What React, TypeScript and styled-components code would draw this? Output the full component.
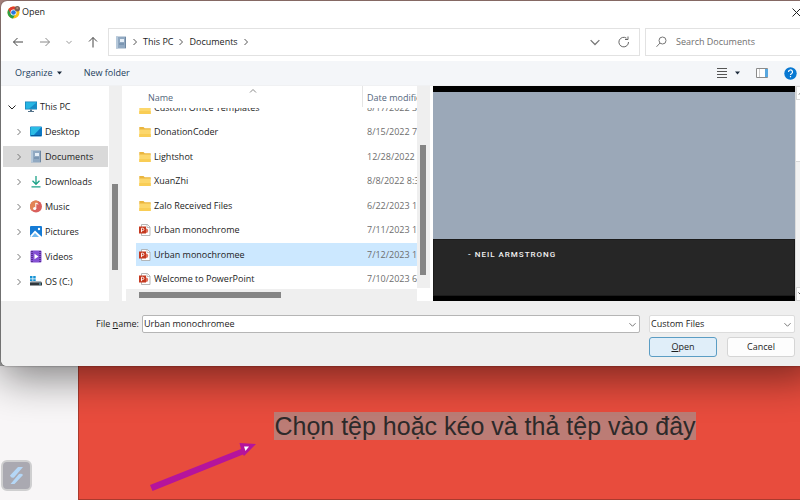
import React, { useState } from "react";
import styled, { createGlobalStyle } from "styled-components";

const GlobalStyle = createGlobalStyle`
  *, *::before, *::after { box-sizing: border-box; }
  body { margin: 0; font-family: "Open Sans", "Noto Sans", sans-serif; font-size: 9px; line-height: 14px; color: #1c1c1c; }
  button, input, select { font: inherit; color: inherit; margin: 0; }
  svg { display: block; flex: none; }
`;

const Page = styled.div`
  min-height: 100vh;
  display: flex;
  flex-direction: column;
  padding: 1px 0 0 1px;
  overflow: hidden;
  background: linear-gradient(#b08a84 0, #aaa 80px);
`;

const Dialog = styled.section`
  position: relative;
  z-index: 1;
  display: flex;
  flex-direction: column;
  margin-right: -16px;
  border-radius: 6px;
  overflow: hidden;
  background: #fff;
  box-shadow: 0 12px 40px rgba(0, 0, 0, 0.48), 0 0 2px rgba(0, 0, 0, 0.5);
`;

const TitleBar = styled.header`
  display: flex;
  align-items: center;
  gap: 2px;
  height: 22px;
  padding: 0 15px 0 6px;
`;

const Title = styled.h1`
  flex: 1;
  margin: 0;
  font-size: 9px;
  font-weight: 400;
`;

const PlainButton = styled.button`
  display: flex;
  align-items: center;
  gap: 4px;
  padding: 0;
  border: 0;
  background: none;
`;

const NavRow = styled.div`
  display: flex;
  align-items: center;
  gap: 5px;
  height: 38px;
  padding-left: 11px;
`;

const NavButtons = styled.div`
  display: flex;
  align-items: center;
  gap: 15px;
  width: 91px;
`;

const AddressBar = styled.nav`
  flex: 1;
  display: flex;
  align-items: center;
  gap: 4px;
  height: 28px;
  padding: 0 9px 0 6px;
  border: 1px solid #e2e2e2;
`;

const Spacer = styled.div`
  flex: 1;
`;

const AddressTools = styled.div`
  display: flex;
  align-items: center;
  gap: 18px;
`;

const SearchBox = styled.label`
  display: flex;
  align-items: center;
  gap: 9px;
  width: 171px;
  height: 28px;
  padding-left: 10px;
  border: 1px solid #e2e2e2;
`;

const SearchInput = styled.input`
  width: 120px;
  padding: 0;
  border: 0;
  outline: 0;
  background: none;
  &::placeholder { color: #6f6f6f; opacity: 1; }
`;

const Toolbar = styled.div`
  display: flex;
  align-items: center;
  height: 25px;
  padding: 0 19px 0 14px;
  background: #f4f6f9;
  color: #23405c;
  border-bottom: 1px solid #f0f1f3;
`;

const ToolGroup = styled.div<{ $gap: number }>`
  display: flex;
  align-items: center;
  gap: ${(p) => p.$gap}px;
`;

const Body = styled.div`
  display: flex;
  height: 215px;
`;

const Tree = styled.ul`
  width: 108px;
  margin: 0;
  padding: 8px 1px 0 2px;
  list-style: none;
`;

const TreeItem = styled.li<{ $root?: boolean; $selected?: boolean }>`
  display: flex;
  align-items: center;
  gap: ${(p) => (p.$root ? 9 : 7)}px;
  height: 21px;
  margin: 2px 0 4px;
  padding-left: ${(p) => (p.$root ? 5 : 12)}px;
  white-space: nowrap;
  background: ${(p) => (p.$selected ? "#d9d9d9" : "transparent")};
`;

const TreeLabel = styled.a`
  display: flex;
  align-items: center;
  gap: 3px;
  color: inherit;
  text-decoration: none;
`;

const Track = styled.div<{ $top: number }>`
  width: 13px;
  padding: ${(p) => p.$top}px 4px 0 3px;
  background: #efefef;
`;

const Thumb = styled.div<{ $length: number; $horizontal?: boolean }>`
  width: ${(p) => (p.$horizontal ? `${p.$length}px` : "auto")};
  height: ${(p) => (p.$horizontal ? "6px" : `${p.$length}px`)};
  background: #858585;
`;

const FilePane = styled.div`
  display: flex;
  flex-direction: column;
  width: 295px;
  padding-left: 4px;
`;

const FileViewport = styled.div`
  flex: 1;
  padding-left: 10px;
  overflow: hidden;
`;

const HorizontalTrack = styled.div`
  height: 12px;
  padding: 3px 0 0 13px;
  background: #efefef;
`;

const FileTable = styled.table`
  width: 100%;
  table-layout: fixed;
  border-collapse: separate;
  border-spacing: 0;
`;

const HeadCell = styled.th<{ $width?: number; $divided?: boolean }>`
  width: ${(p) => (p.$width ? `${p.$width}px` : "auto")};
  height: 21px;
  padding: 2px 0 0 ${(p) => (p.$divided ? 4 : 12)}px;
  border-left: ${(p) => (p.$divided ? "1px solid #e5e5e5" : "0")};
  overflow: hidden;
  font-weight: 400;
  text-align: left;
  white-space: nowrap;
  color: #53667c;
`;

const HeadContent = styled.div`
  display: flex;
  align-items: center;
  position: relative;
`;

const SortMark = styled.span`
  position: absolute;
  left: 101px;
  top: -4px;
`;

const FileRow = styled.tr<{ $selected?: boolean }>`
  height: 24px;
  &:nth-child(odd) { height: 25px; }
  &:first-child { height: 13px; }
  td {
    padding: 0 0 0 3px;
    border: solid transparent;
    border-width: 1px 0;
    background: ${(p) => (p.$selected ? "#cce8ff" : "transparent")};
    background-clip: padding-box;
    overflow: hidden;
    white-space: nowrap;
  }
  td + td { padding-left: 5px; color: #6d6d6d; }
`;

const CellContent = styled.div<{ $clipped?: boolean }>`
  display: flex;
  align-items: ${(p) => (p.$clipped ? "flex-end" : "center")};
  gap: 3px;
  height: ${(p) => (p.$clipped ? "11px" : "auto")};
  padding-bottom: ${(p) => (p.$clipped ? "4px" : "0")};
  overflow: hidden;
`;

const ListScroll = styled.div`
  display: flex;
  width: 13px;
  padding-bottom: 13px;
`;

const Preview = styled.div`
  flex: 1;
  display: flex;
  flex-direction: column;
  margin-left: 3px;
  padding: 6px 0 5px;
  background: #000;
`;

const Slide = styled.div`
  flex: 1;
  background: #9ba8b8;
`;

const Caption = styled.div`
  height: 57px;
  padding: 8px 34px;
  border: 1px solid #1b1b1b;
  background: #262626;
  color: #f2f2f2;
  font: 500 8px/14px Roboto, sans-serif;
  letter-spacing: 1px;
`;

const PreviewScroll = styled.div`
  display: flex;
  flex-direction: column;
  justify-content: space-between;
  width: 21px;
  border-left: 1px solid #ddd;
  background: #f2f2f2;
`;

const ScrollEnd = styled.button`
  display: flex;
  align-items: center;
  height: 14px;
  padding: 0 1px;
  border: 1px solid #d8d8d8;
  background: #fff;
`;

const ScrollFill = styled.div`
  height: 62px;
  margin-bottom: auto;
  border-bottom: 1px solid #d8d8d8;
  background: #fff;
`;

const Footer = styled.footer`
  display: flex;
  flex-direction: column;
  gap: 4px;
  padding: 14px 21px 9px 95px;
  background: #efefef;
`;

const FooterRow = styled.div<{ $end?: boolean }>`
  display: flex;
  align-items: center;
  justify-content: ${(p) => (p.$end ? "flex-end" : "flex-start")};
  gap: ${(p) => (p.$end ? 10 : 3)}px;
`;

const Combo = styled.div`
  flex: 1;
  display: flex;
  align-items: center;
  height: 18px;
  padding-right: 3px;
  border: 1px solid #b5b5b5;
  border-radius: 2px;
  background: #fff;
`;

const ComboInput = styled.input`
  flex: 1;
  min-width: 0;
  padding: 0 1px;
  border: 0;
  outline: 0;
  background: none;
`;

const SelectFrame = styled.div`
  display: grid;
  align-items: center;
  width: 146px;
  margin-left: 6px;
  height: 18px;
  border: 1px solid #dcdcdc;
  border-radius: 2px;
  background: #fff;
  > * { grid-area: 1 / 1; }
  > svg { justify-self: end; margin-right: 3px; pointer-events: none; }
`;

const TypeSelect = styled.select`
  appearance: none;
  padding: 0 1px;
  border: 0;
  outline: 0;
  background: none;
`;

const ActionButton = styled.button<{ $primary?: boolean }>`
  width: 68px;
  height: 20px;
  padding: 0;
  border: 1px solid ${(p) => (p.$primary ? "#5b9dc4" : "#d5d5d5")};
  border-radius: 3px;
  background: ${(p) => (p.$primary ? "#e0eef9" : "#fdfdfd")};
`;

const Workspace = styled.main`
  flex: 1;
  display: flex;
  margin-left: -1px;
`;

const SideStrip = styled.aside`
  display: flex;
  align-items: flex-end;
  width: 78px;
  padding: 0 0 9px 1px;
  background: #f8f6f7;
`;

const DropZone = styled.div`
  position: relative;
  flex: 1;
  display: flex;
  justify-content: center;
  padding: 46px 0 0 91px;
  border: solid #a93a2e;
  border-width: 0 0 1px 1px;
  background: #e84c3d;
`;

const DropText = styled.p`
  margin: 0;
  font: 25px/28px "Liberation Sans", Arial, sans-serif;
  color: #2d2a2a;
  white-space: nowrap;
  span { display: block; background: #bc7c75; }
`;

const ArrowMark = styled.svg`
  position: absolute;
  left: 70px;
  bottom: 8px;
`;

type Dir = "left" | "right" | "up" | "down";
const chevrons: Record<Dir, string> = {
  left: "M6 1 2 4l4 3", right: "M2.5 1 5.5 4l-3 3", up: "m1 5.5 3-3 3 3", down: "m0.5 2.5 3.5 3.5 3.5-3.5",
};
const Chevron = ({ dir, size = 8, color = "#555" }: { dir: Dir; size?: number; color?: string }) => (
  <svg width={size} height={size} viewBox="0 0 8 8" fill="none" stroke={color} strokeWidth="1"><path d={chevrons[dir]} /></svg>
);

const arrows = { left: "M11 6H1.500M5.500 2 1.500 6l4 4", right: "M1 6h9.500M6.500 2l4 4-4 4", up: "M6 11.500V1.500M2 5.500l4-4 4 4" };
const Arrow = ({ dir, color = "#444" }: { dir: "left" | "right" | "up"; color?: string }) => (
  <svg width="12" height="12" viewBox="0 0 12 12" fill="none" stroke={color}><path d={arrows[dir]} /></svg>
);

const Caret = () => <svg width="5" height="4" viewBox="0 0 5 4"><path d="M0 .5h5L2.500 3.500z" fill="#1c2b3c" /></svg>;

const ChromeIcon = () => (
  <svg width="13" height="13" viewBox="0 0 24 24">
    <circle cx="12" cy="12" r="11" fill="#fbc116" />
    <path d="M12 12 2.500 6.500A11 11 0 0 0 11 23l5-8.700z" fill="#2c9f47" />
    <path d="M2.500 6.500A11 11 0 0 1 21.500 6.500H12L7.200 14.700z" fill="#e23a2e" />
    <circle cx="12" cy="12" r="5.500" fill="#fff" />
    <circle cx="12" cy="12" r="4.300" fill="#2878df" />
    <circle cx="19" cy="5" r="5" fill="#776057" />
    <circle cx="19" cy="4" r="2" fill="#b78c74" />
  </svg>
);

const DocIcon = () => (
  <svg width="12" height="13" viewBox="0 0 12 13">
    <path d="M1 .5h10v12H1z" fill="#91a9c2" /><path d="M1 .5h2v12H1z" fill="#b5c8da" />
    <path d="M5 3h4v3H5z" fill="#e5eef7" /><path d="M4 8h5" stroke="#6583a3" /><path d="M10.500 1v11" stroke="#6f87a1" />
  </svg>
);

const TreeIcon = ({ kind }: { kind: string }) => {
  if (kind === "doc") return <DocIcon />;
  return (
    <svg width={12} height={13} viewBox="0 0 12 13">
      {kind === "pc" && <><path d="M0 1.500h12v8H0z" fill="#187fb5" /><path d="M.7 2.200h10.600v6.600H.7z" fill="#26b5e3" /><path d="m4 8.800 7.300-6v6z" fill="#168ac5" /><path d="M5 9.500h2v1.500h2v1H3v-1h2z" fill="#54728a" /></>}
      {kind === "desktop" && <><rect y="1.500" width="12" height="10" rx="1" fill="#0c78c4" /><path d="M1 2h10.500L3 11H.5V3z" fill="#2bbce5" /><path d="M1 10.500h10" stroke="#07599b" /></>}
      {kind === "download" && <path d="M6 1v8M2.500 5.800 6 9.300l3.500-3.500M1.500 11.800h9" fill="none" stroke="#1ca287" strokeWidth="1.300" />}
      {kind === "music" && <><circle cx="6" cy="6.500" r="6" fill="#d9605d" /><path d="M6 .5a6 6 0 0 0-4 10.500L9 1.400z" fill="#e28456" /><circle cx="4.700" cy="8.500" r="1.600" fill="#fff" /><path d="M5.800 8.500V3l2.500 1.200" fill="none" stroke="#fff" /></>}
      {kind === "picture" && <><rect y="1" width="12" height="11" rx="1" fill="#167bd5" /><path d="m0 11 5-5.500L12 12H1z" fill="#fff" /><path d="m1.500 12 3.500-4 4 4z" fill="#71b9ef" /><circle cx="9" cy="4" r="1.200" fill="#fff" /></>}
      {kind === "video" && <><rect x=".5" y=".5" width="11" height="12" rx="1" fill="#8550d4" /><path d="M2 1v11M10 1v11" stroke="#482478" strokeWidth="1.500" strokeDasharray="1 1" /><path d="m4.500 3.800 4 2.700-4 2.700z" fill="#fff" /></>}
      {kind === "drive" && <><path d="M0 1h2.500v2.500H0zM3.200 1h2.500v2.500H3.200zM0 4.200h2.500v2H0zM3.200 4.200h2.500v2H3.200z" fill="#1592d4" /><path d="M1 6h10l1 2H0z" fill="#aeb6bd" /><path d="M0 7.500h12v3H0z" fill="#30373d" /><path d="M9 9h2" stroke="#69cce0" /></>}
    </svg>
  );
};

const FolderIcon = () => (
  <svg width="12" height="12" viewBox="0 0 12 12"><path d="M.3 1h4.200l1.200 1.300h6v2H.3z" fill="#eab53e" /><path d="M.3 3.500h11.400V11H.3z" fill="#fcd76c" /><path d="M.3 8h11.400v3H.3z" fill="#f9cd55" /></svg>
);

const SlidesIcon = () => (
  <svg width="12" height="12" viewBox="0 0 12 12">
    <path d="M2.500.5h6l2.500 2.500v8.500H2.500z" fill="#fff" stroke="#a4a4a4" strokeWidth=".8" /><path d="M8 .8v2.700h3" fill="none" stroke="#aaa" strokeWidth=".7" />
    <path d="M7 4.500a2.200 2.200 0 1 1 0 4.400z" fill="#df705b" /><path d="M0 2.500h7v7H0z" fill="#c5391f" />
    <path d="M2.500 8.200V4.200h1.200a1.200 1.200 0 0 1 0 2.400H2.500" fill="none" stroke="#fff" strokeWidth=".9" />
  </svg>
);

const tree = [
  ["Desktop", "desktop"], ["Documents", "doc"], ["Downloads", "download"], ["Music", "music"],
  ["Pictures", "picture"], ["Videos", "video"], ["OS (C:)", "drive"],
];

const files = [
  { name: "Custom Office Templates", date: "8/17/2022 3", folder: true },
  { name: "DonationCoder", date: "8/15/2022 7", folder: true },
  { name: "Lightshot", date: "12/28/2022", folder: true },
  { name: "XuanZhi", date: "8/8/2022 8:3", folder: true },
  { name: "Zalo Received Files", date: "6/22/2023 1", folder: true },
  { name: "Urban monochrome", date: "7/11/2023 1", folder: false },
  { name: "Urban monochromee", date: "7/12/2023 1", folder: false },
  { name: "Welcome to PowerPoint", date: "7/10/2023 6", folder: false },
];

export default function App() {
  const [selected, setSelected] = useState("Urban monochromee");
  return (
    <>
      <GlobalStyle />
      <Page>
        <Dialog role="dialog" aria-label="Open">
          <TitleBar>
            <ChromeIcon />
            <Title>Open</Title>
            <PlainButton aria-label="Close"><svg width="9" height="9" viewBox="0 0 9 9" stroke="#222"><path d="m.5.5 8 8m0-8-8 8" /></svg></PlainButton>
          </TitleBar>
          <NavRow>
            <NavButtons>
              <PlainButton aria-label="Back"><Arrow dir="left" /></PlainButton>
              <PlainButton aria-label="Forward"><Arrow dir="right" color="#8a8a8a" /></PlainButton>
              <PlainButton aria-label="Recent locations"><Chevron dir="down" size={6} color="#777" /></PlainButton>
              <PlainButton aria-label="Up"><Arrow dir="up" /></PlainButton>
            </NavButtons>
            <AddressBar aria-label="Location">
              <DocIcon />
              <Chevron dir="right" />
              <PlainButton>This PC</PlainButton>
              <Chevron dir="right" />
              <PlainButton>Documents</PlainButton>
              <Chevron dir="right" />
              <Spacer />
              <AddressTools>
                <PlainButton aria-label="Previous locations"><Chevron dir="down" size={10} color="#777" /></PlainButton>
                <PlainButton aria-label="Refresh">
                  <svg width="12" height="12" viewBox="0 0 12 12" fill="none" stroke="#666"><path d="M10.500 6A4.800 4.800 0 1 1 8.500 2.200M10 .5v3H7" /></svg>
                </PlainButton>
              </AddressTools>
            </AddressBar>
            <SearchBox>
              <svg width="11" height="12" viewBox="0 0 11 12" fill="none" stroke="#777"><circle cx="6.500" cy="4.500" r="3.500" /><path d="M4 7 .5 10.800" /></svg>
              <SearchInput placeholder="Search Documents" aria-label="Search Documents" />
            </SearchBox>
          </NavRow>
          <Toolbar>
            <ToolGroup $gap={22}>
              <PlainButton>Organize <Caret /></PlainButton>
              <PlainButton>New folder</PlainButton>
            </ToolGroup>
            <Spacer />
            <ToolGroup $gap={16}>
              <PlainButton aria-label="Change view">
                <ToolGroup $gap={8}>
                  <svg width="10" height="10" viewBox="0 0 10 10" stroke="#555"><path d="M0 .5h10M0 3.500h10M0 6.500h10M0 9.500h10" /></svg>
                  <Caret />
                </ToolGroup>
              </PlainButton>
              <PlainButton aria-label="Preview pane">
                <svg width="12" height="10" viewBox="0 0 12 10"><path d="M.5.5h11v9H.5z" fill="#fff" stroke="#8b8b8b" /><path d="M3.500 1v8" stroke="#ccc" /><path d="M9 1h3v8H9z" fill="#58a7df" /></svg>
              </PlainButton>
              <PlainButton aria-label="Help">
                <svg width="13" height="13" viewBox="0 0 13 13"><circle cx="6.500" cy="6.500" r="6.200" fill="#0878d2" /><path d="M4.500 5a2 2 0 1 1 3 1.700q-1 .5-1 1.300M6.500 9v1.200" fill="none" stroke="#fff" strokeWidth="1.200" /></svg>
              </PlainButton>
            </ToolGroup>
          </Toolbar>
          <Body>
            <Tree>
              <TreeItem $root><Chevron dir="down" color="#222" /><TreeLabel href="#pc"><TreeIcon kind="pc" />This PC</TreeLabel></TreeItem>
              {tree.map(([label, kind]) => (
                <TreeItem key={label} $selected={label === "Documents"}>
                  <Chevron dir="right" color="#777" />
                  <TreeLabel href={`#${kind}`}><TreeIcon kind={kind} />{label}</TreeLabel>
                </TreeItem>
              ))}
            </Tree>
            <Track $top={98}><Thumb $length={86} /></Track>
            <FilePane>
              <FileViewport>
                <FileTable>
                  <thead>
                    <tr>
                      <HeadCell $width={226}><HeadContent>Name<SortMark><Chevron dir="up" color="#888" /></SortMark></HeadContent></HeadCell>
                      <HeadCell $divided>Date modified</HeadCell>
                    </tr>
                  </thead>
                  <tbody>
                    {files.map((f, i) => (
                      <FileRow key={f.name} $selected={f.name === selected} onClick={() => setSelected(f.name)}>
                        <td><CellContent $clipped={i === 0}>{f.folder ? <FolderIcon /> : <SlidesIcon />}{f.name}</CellContent></td>
                        <td><CellContent $clipped={i === 0}>{f.date}</CellContent></td>
                      </FileRow>
                    ))}
                  </tbody>
                </FileTable>
              </FileViewport>
              <HorizontalTrack><Thumb $length={142} $horizontal /></HorizontalTrack>
            </FilePane>
            <ListScroll><Track $top={59}><Thumb $length={130} /></Track></ListScroll>
            <Preview>
              <Slide />
              <Caption>- NEIL ARMSTRONG</Caption>
            </Preview>
            <PreviewScroll>
              <ScrollEnd aria-label="Scroll up"><Chevron dir="up" /></ScrollEnd>
              <ScrollFill />
              <ScrollEnd aria-label="Scroll down"><Chevron dir="down" /></ScrollEnd>
            </PreviewScroll>
          </Body>
          <Footer>
            <FooterRow>
              <label htmlFor="file-name">File <u>n</u>ame:</label>
              <Combo>
                <ComboInput id="file-name" value={selected} onChange={(e) => setSelected(e.target.value)} />
                <PlainButton aria-label="Recent file names"><Chevron dir="down" size={7} color="#666" /></PlainButton>
              </Combo>
              <SelectFrame>
                <TypeSelect aria-label="File type"><option>Custom Files</option></TypeSelect>
                <Chevron dir="down" size={7} color="#666" />
              </SelectFrame>
            </FooterRow>
            <FooterRow $end>
              <ActionButton $primary><u>O</u>pen</ActionButton>
              <ActionButton>Cancel</ActionButton>
            </FooterRow>
          </Footer>
        </Dialog>
        <Workspace>
          <SideStrip>
            <PlainButton aria-label="Quick launch">
              <svg width="31" height="31" viewBox="0 0 31 31">
                <rect x="1" y="1" width="29" height="29" rx="5" fill="#aaa9b1" stroke="#cfcfd0" strokeWidth="2" />
                <path d="M9 15.500 17 7h5l-9 10.500q-3 1-4-2zM22 15l-8.500 9h-4L18 14q3-1 4 1z" fill="#b5d7f6" />
              </svg>
            </PlainButton>
          </SideStrip>
          <DropZone>
            <DropText><span>Chọn tệp hoặc kéo và thả tệp vào đây</span></DropText>
            <ArrowMark width="108" height="52" viewBox="0 0 108 52">
              <path d="M1 46 92 10 90.500 4 107 5 95 17 94 15.500 3.500 52z" fill="#b5149c" />
              <path d="m95 7.500 5 0-3.500 4.500z" fill="#fff" />
            </ArrowMark>
          </DropZone>
        </Workspace>
      </Page>
    </>
  );
}
